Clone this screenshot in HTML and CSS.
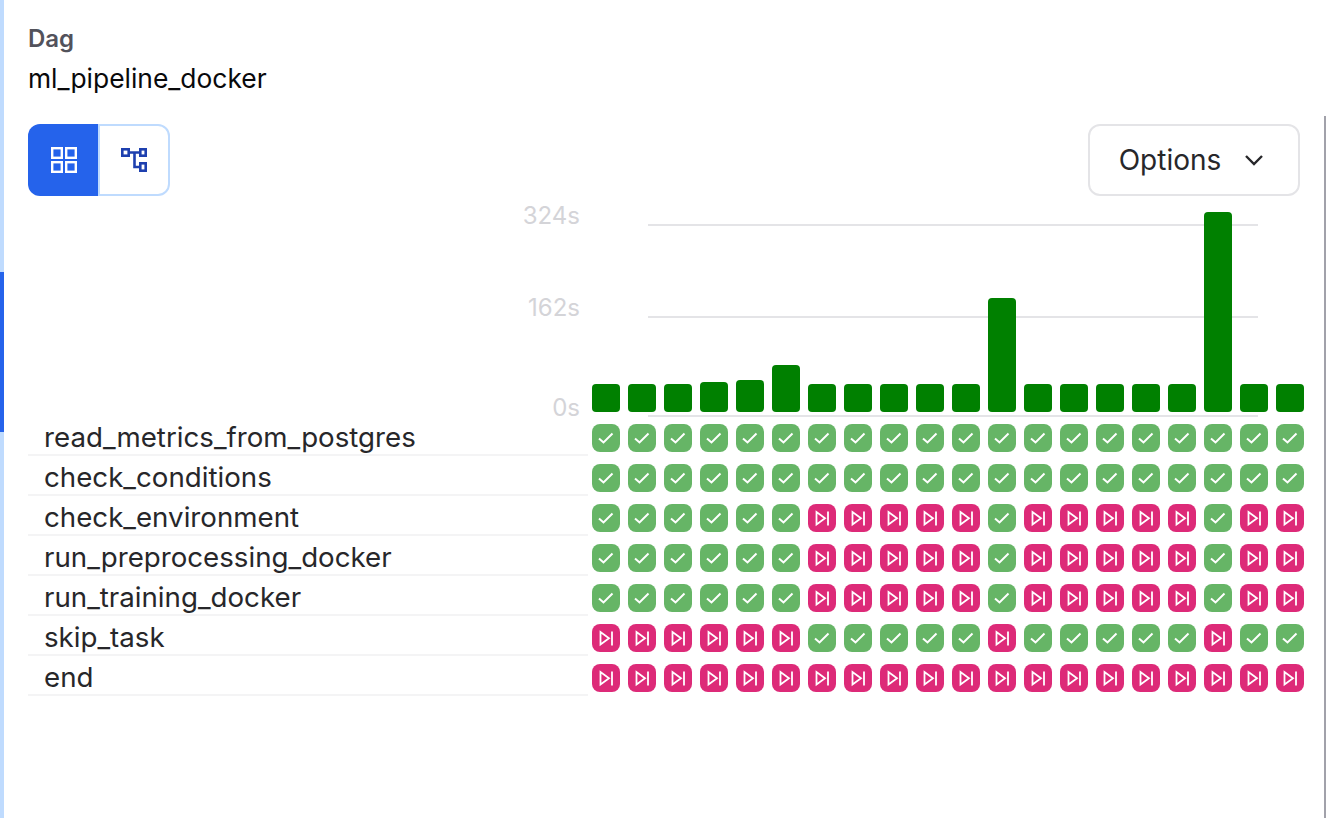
FILE: index.html
```html
<!DOCTYPE html>
<html lang="en">
	<head>
		<meta charset="utf-8">
		<title>ml_pipeline_docker</title>
		<link rel="stylesheet" href="styles.css">
	</head>
	<body>
		<div class="rail"><div class="rail-mark"></div></div>
		<main class="panel">
			<div class="dag-head">
				<p class="dag-label">Dag</p>
				<p class="dag-name">ml_pipeline_docker</p>
			</div>

			<div class="toolbar">
				<div class="toggle">
					<button class="toggle-btn active">
						<svg width="26" height="26" viewBox="0 0 26 26" fill="none" stroke="#fff" stroke-width="2.400"><rect x="1.200" y="1.200" width="9.600" height="9.600"/><rect x="15.200" y="1.200" width="9.600" height="9.600"/><rect x="1.200" y="15.200" width="9.600" height="9.600"/><rect x="15.200" y="15.200" width="9.600" height="9.600"/></svg>
					</button>
					<button class="toggle-btn">
						<svg width="26" height="24" viewBox="0 0 26 24" fill="none" stroke="#1e40af" stroke-width="2.600"><rect x="1.300" y="1.300" width="6.400" height="6.400"/><rect x="19.300" y="1.300" width="5.400" height="6.400"/><rect x="19.300" y="15.300" width="5.400" height="7.400"/><path d="M8 4.500H19M13.500 4.500V19H19"/></svg>
					</button>
				</div>
				<button class="options">Options
					<svg width="20" height="12" viewBox="0 0 20 12" fill="none" stroke="#27272a" stroke-width="2.400"><path d="M2 2l8 8 8-8"/></svg>
				</button>
			</div>

			<div class="chart">
				<div class="y-labels"><span>324s</span><span>162s</span><span class="zero">0s</span></div>
				<div class="plot" id="plot">
					<div class="grid-line top"></div>
					<div class="grid-line mid"></div>
					<div class="grid-line base"></div>
				</div>
			</div>

			<div id="rows"></div>
		</main>

		<svg class="defs" width="0" height="0">
			<symbol id="check" viewBox="0 0 28 28"><path d="M7 14.500l4.500 4 9-9" fill="none" stroke="#fff" stroke-width="2"/></symbol>
			<symbol id="skip" viewBox="0 0 28 28"><path d="M8.500 8v12.500l8.500-6.250zM20 7.500v14" fill="none" stroke="#fff" stroke-width="1.800"/></symbol>
		</svg>

		<script>
			//Bar heights in px, one per dag run
			var bars = [28, 28, 28, 30, 32, 47, 28, 28, 28, 28, 28, 114, 28, 28, 28, 28, 28, 200, 28, 28];

			// s = success, k = skipped
			var tasks = [
				["read_metrics_from_postgres", "ssssssssssssssssssss"],
				["check_conditions", "ssssssssssssssssssss"],
				["check_environment", "sssssskkkkkskkkkkskk"],
				["run_preprocessing_docker", "sssssskkkkkskkkkkskk"],
				["run_training_docker", "sssssskkkkkskkkkkskk"],
				["skip_task", "kkkkkksssssksssssk" + "ss"],
				["end", "kkkkkkkkkkkkkkkkkkkk"]
			];

			var plot = document.getElementById("plot");
			bars.forEach(function(h) {
				var bar = document.createElement("div");
				bar.className = "bar";
				bar.style.height = h + "px";
				plot.appendChild(bar);
			});

			var rows = document.getElementById("rows");
			tasks.forEach(function(t) {
				var cells = "";
				t[1].split("").forEach(function(c) {
					if (c == "s") {
						cells += '<svg class="cell success"><use href="#check"/></svg>';
					} else {
						cells += '<svg class="cell skipped"><use href="#skip"/></svg>';
					}
				});
				var row = document.createElement("div");
				row.className = "row";
				row.innerHTML = '<div class="task-name">' + t[0] + '</div><div class="cells">' + cells + '</div>';
				rows.appendChild(row);
			});
		</script>
	</body>
</html>
```

FILE: styles.css
```css
html, body {
	height: 100%;
}

body {
	margin: 0;
	display: flex;
	overflow: hidden;
	background: #fff;
	font-family: Inter, sans-serif;
}

.rail {
	width: 4px;
	height: 818px;
	padding-top: 272px;
	box-sizing: border-box;
	background: #bfdbfe;
	flex: none;
}

.rail-mark {
	height: 160px;
	background: #2563eb;
}

.panel {
	position: relative;
	flex: 1;
	min-width: 0;
	padding: 24px 26px 0 24px;
}

.panel::after {
	content: "";
	position: absolute;
	right: 0;
	top: 116px;
	bottom: 0;
	width: 2px;
	background: #a1a1aa;
}

.dag-head p {
	margin: 0;
}

.dag-label {
	font-size: 24px;
	line-height: 30px;
	font-weight: 600;
	color: #52525b;
}

.dag-name {
	margin-top: 4px !important;
	font-size: 26.400px;
	line-height: 40px;
	color: #09090b;
}

.toolbar {
	display: flex;
	justify-content: space-between;
	margin-top: 26px;
}

.toggle {
	display: flex;
}

.toggle-btn {
	display: flex;
	align-items: center;
	justify-content: center;
	width: 72px;
	height: 72px;
	padding: 0;
	background: #fff;
	border: 2px solid #bfdbfe;
	border-radius: 0 12px 12px 0;
}

.toggle-btn.active {
	width: 70px;
	padding-left: 2px;
	background: #2563eb;
	border: 0;
	border-radius: 12px 0 0 12px;
}

.options {
	display: flex;
	align-items: center;
	justify-content: center;
	gap: 23px;
	width: 212px;
	height: 72px;
	padding: 0 5px 0 0;
	background: #fff;
	border: 2px solid #e4e4e7;
	border-radius: 12px;
	font-family: Inter, sans-serif;
	font-size: 28px;
	color: #27272a;
}

.chart {
	display: flex;
	height: 220px;
}

.y-labels {
	flex: none;
	width: 552px;
	padding-top: 5px;
	box-sizing: border-box;
	display: flex;
	flex-direction: column;
	align-items: flex-end;
	gap: 62px;
	font-size: 24px;
	line-height: 30px;
	color: #d4d4d8;
}

.y-labels .zero {
	margin-top: 8px;
}

.plot {
	position: relative;
	display: flex;
	align-items: flex-end;
	gap: 8px;
	margin-left: 12px;
	padding-bottom: 4px;
	box-sizing: border-box;
}

.bar {
	position: relative;
	flex: none;
	width: 28px;
	background: #008000;
	border-radius: 4px;
}

.grid-line {
	position: absolute;
	left: 56px;
	width: 610px;
	height: 2px;
	background: #e4e4e7;
}

.grid-line.top { top: 28px; }
.grid-line.mid { top: 120px; }
.grid-line.base { top: 219px; }

.row {
	display: flex;
	align-items: flex-start;
	gap: 4px;
	height: 40px;
}

.task-name {
	flex: none;
	width: 560px;
	height: 40px;
	box-sizing: border-box;
	padding-left: 16px;
	border-bottom: 2px solid #f4f4f5;
	font-size: 27.700px;
	line-height: 43px;
	color: #27272a;
}

.cells {
	flex: none;
	display: flex;
	gap: 8px;
	margin-top: 8px;
}

.cell {
	width: 28px;
	height: 28px;
	border-radius: 8px;
}

.cell.success {
	background: #66b566;
}

.cell.skipped {
	background: #dd2a78;
}

.defs {
	position: absolute;
}
```
